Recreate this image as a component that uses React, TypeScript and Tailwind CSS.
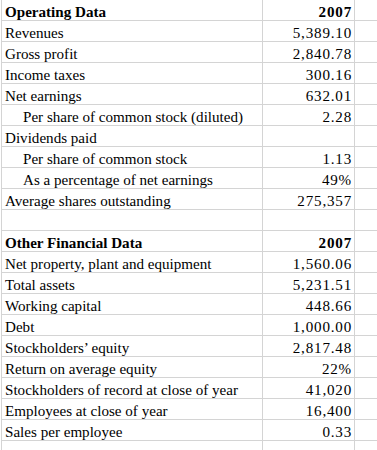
import React from "react";

type Row = { label?: string; value?: string; bold?: boolean; indent?: boolean };

const rows: Row[] = [
  { label: "Operating Data", value: "2007", bold: true },
  { label: "Revenues", value: "5,389.10" },
  { label: "Gross profit", value: "2,840.78" },
  { label: "Income taxes", value: "300.16" },
  { label: "Net earnings", value: "632.01" },
  { label: "Per share of common stock (diluted)", value: "2.28", indent: true },
  { label: "Dividends paid" },
  { label: "Per share of common stock", value: "1.13", indent: true },
  { label: "As a percentage of net earnings", value: "49%", indent: true },
  { label: "Average shares outstanding", value: "275,357" },
  {},
  { label: "Other Financial Data", value: "2007", bold: true },
  { label: "Net property, plant and equipment", value: "1,560.06" },
  { label: "Total assets", value: "5,231.51" },
  { label: "Working capital", value: "448.66" },
  { label: "Debt", value: "1,000.00" },
  { label: "Stockholders\u2019 equity", value: "2,817.48" },
  { label: "Return on average equity", value: "22%" },
  { label: "Stockholders of record at close of year", value: "41,020" },
  { label: "Employees at close of year", value: "16,400" },
  { label: "Sales per employee", value: "0.33" },
  {},
];

export default function App() {
  return (
    <div
      className="w-[377px] h-[450px] overflow-hidden bg-white text-black pl-[1px]"
      style={{ fontFamily: '"Liberation Serif", "Times New Roman", serif' }}
    >
      {rows.map((r, i) => (
        <div key={i} className="flex h-[21px] border-b border-[#d4d4d4]">
          <div
            className={`w-[262px] shrink-0 border-l border-r border-[#d4d4d4] flex items-end whitespace-nowrap text-[15.1px] leading-[16px] ${
              r.indent ? "pl-[21px]" : "pl-[3px]"
            } ${r.bold ? "font-bold" : ""}`}
          >
            {r.label}
          </div>
          <div
            className={`w-[92px] shrink-0 border-r border-[#d4d4d4] flex items-end justify-end pr-[2px] whitespace-nowrap text-[15.1px] leading-[16px] tracking-[0.8px] ${
              r.bold ? "font-bold" : ""
            }`}
          >
            {r.value}
          </div>
          <div className="flex-1" />
        </div>
      ))}
    </div>
  );
}
